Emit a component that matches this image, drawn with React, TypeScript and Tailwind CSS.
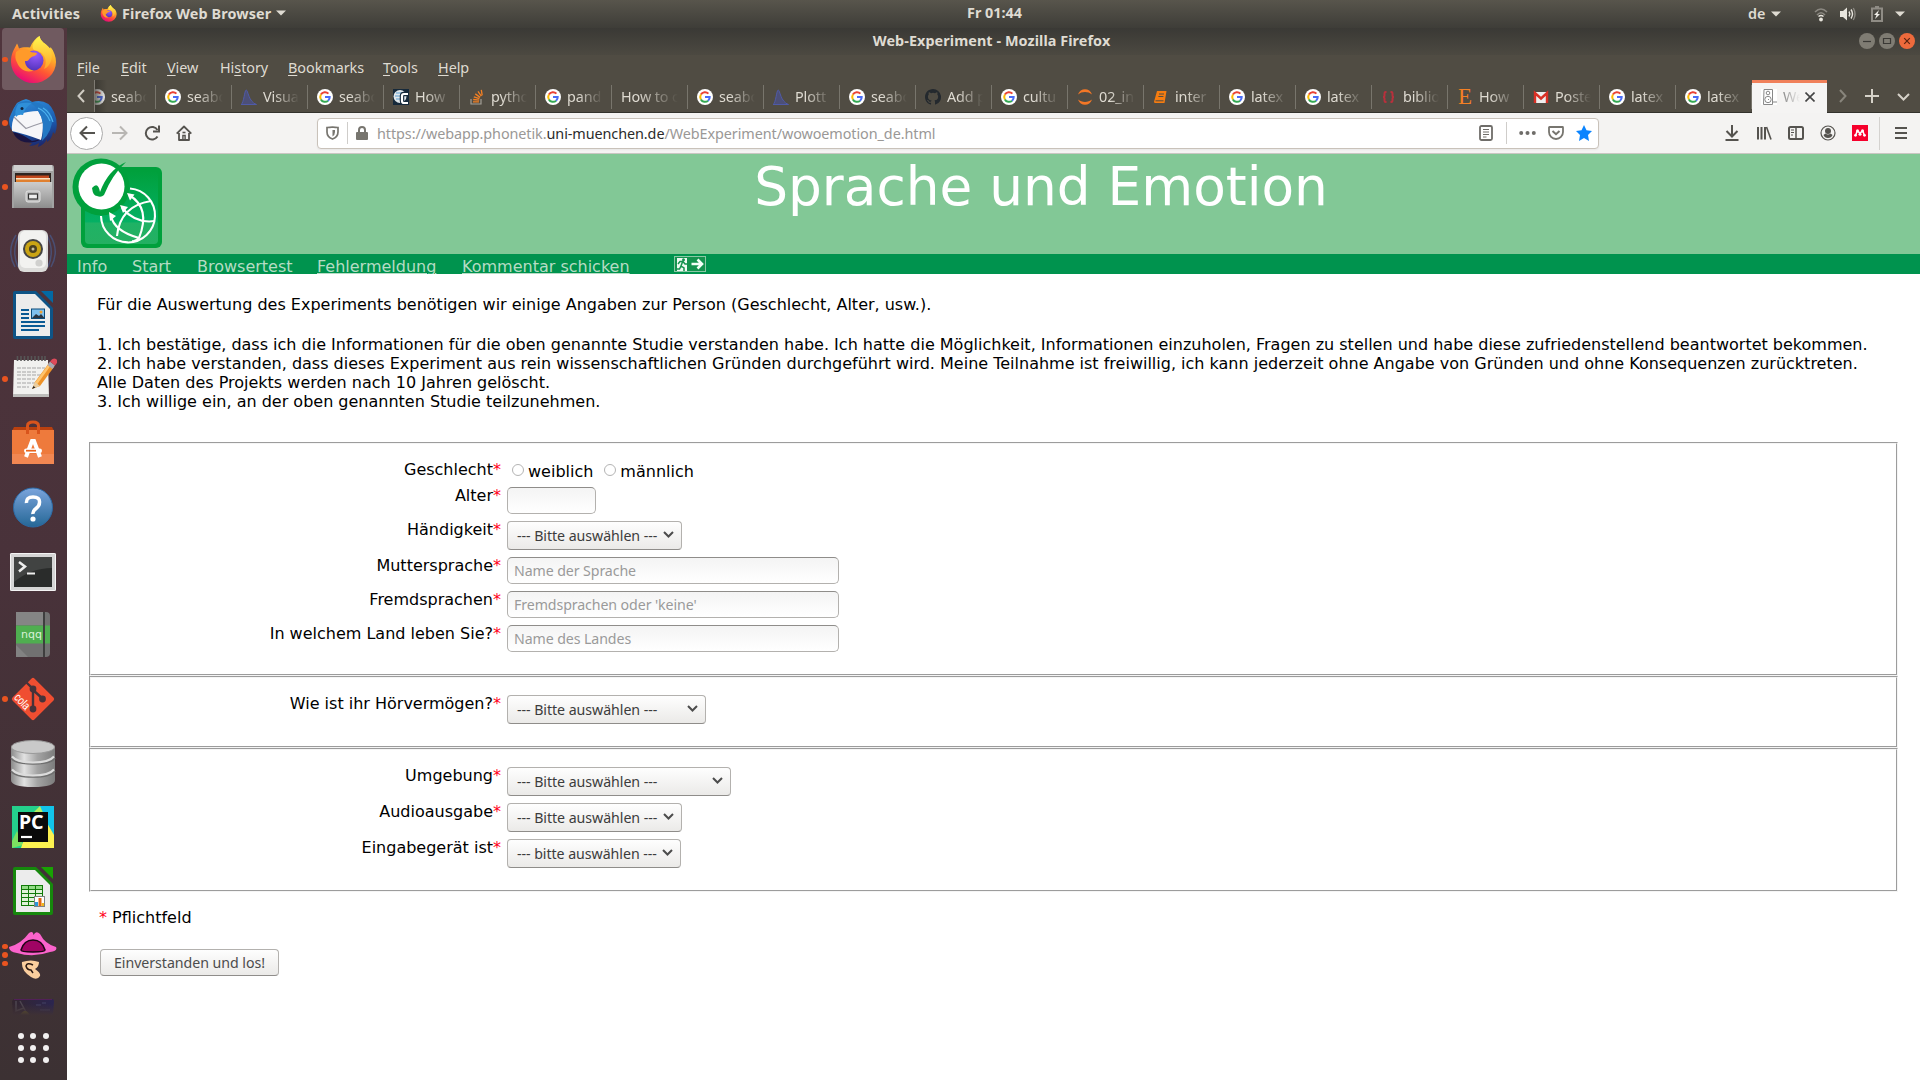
import React from "react";

const UI = "font-['Noto_Sans',sans-serif]";

function Google() {
  return (
    <svg className="h-4 w-4 shrink-0" viewBox="0 0 16 16">
      <circle cx="8" cy="8" r="8" fill="#fff" />
      <g fill="none" strokeWidth="2">
        <path d="M11.4 4.6A4.7 4.7 0 0 0 3.9 5.6" stroke="#ea4335" />
        <path d="M3.9 5.6a4.7 4.7 0 0 0 0 4.8" stroke="#fbbc05" />
        <path d="M3.9 10.4a4.7 4.7 0 0 0 7.2 1.3" stroke="#34a853" />
        <path d="M11.1 11.7A4.7 4.7 0 0 0 12.700 8H8" stroke="#4a6cf7" />
      </g>
    </svg>
  );
}

function Plot() {
  return (
    <svg className="h-4 w-4 shrink-0" viewBox="0 0 16 16">
      <path d="M0 15.500C3 14 3.500 1 5.200 1C7 1 7.500 13 15.500 15.500Z" fill="#4c4f78" stroke="#4f5aa8" strokeWidth="1" />
    </svg>
  );
}

function Favicon({ kind }: { kind: string }) {
  const c = "h-4 w-4 shrink-0";
  switch (kind) {
    case "google":
      return <Google />;
    case "plot":
      return <Plot />;
    case "c":
      return (
        <svg className={c} viewBox="0 0 16 16">
          <rect width="16" height="16" fill="#16293a" />
          <circle cx="7" cy="7.500" r="6.500" fill="#dfe6ea" />
          <path d="M3 4h7M2 7h5M3 10h4" stroke="#5b9bd0" strokeWidth="1.200" />
          <path d="M15 5H11Q9 5 9 7v5q0 2 2 2h4" fill="none" stroke="#16293a" strokeWidth="4.500" />
          <path d="M15 5H11Q9 5 9 7v5q0 2 2 2h4" fill="none" stroke="#fff" strokeWidth="2.200" />
        </svg>
      );
    case "stack":
      return (
        <svg className={c} viewBox="0 0 16 16" fill="none">
          <path d="M2 10v5h10v-5" stroke="#a39f97" strokeWidth="1.200" />
          <path d="M4 12.800h6M4.200 10.500l6 .7M4.800 7.800l5.600 1.900M6.300 4.900l4.800 3.500M9 2.300l3.300 4.800M12.300.8l.9 5.600" stroke="#f48024" strokeWidth="1.300" />
        </svg>
      );
    case "github":
      return (
        <svg className={c} viewBox="0 0 16 16" fill="#24292e">
          <path d="M8 0C3.580 0 0 3.580 0 8c0 3.540 2.290 6.530 5.470 7.590.4.070.55-.17.55-.38v-1.490c-2.010.37-2.530-.49-2.690-.94-.09-.23-.48-.94-.82-1.130-.28-.15-.68-.52-.01-.53.630-.01 1.080.58 1.230.82.720 1.210 1.870.87 2.330.66.070-.52.280-.87.510-1.070-1.780-.2-3.640-.89-3.640-3.950 0-.87.310-1.590.820-2.150-.08-.2-.36-1.020.080-2.120 0 0 .67-.21 2.200.82a7.600 7.600 0 0 1 4 0c1.530-1.040 2.200-.82 2.200-.82.440 1.100.160 1.920.080 2.120.510.560.820 1.270.820 2.150 0 3.070-1.870 3.750-3.650 3.950.290.250.540.730.540 1.480v2.200c0 .21.150.46.550.38A8 8 0 0 0 8 0Z" />
        </svg>
      );
    case "jupyter":
      return (
        <svg className={c} viewBox="0 0 16 16" fill="#f37726">
          <path d="M1 5.500C3-1.500 13-1.500 15 5.500C11 2.200 5 2.200 1 5.500Z" />
          <path d="M1 10.500C3 17.500 13 17.500 15 10.500C11 13.800 5 13.800 1 10.500Z" />
        </svg>
      );
    case "book":
      return (
        <svg className={c} viewBox="0 0 16 16">
          <path d="M4 2H13.500L11.500 14H1.500Q.5 12.500 1.500 11Z" fill="#f57c10" />
          <path d="M6 5h5M5.400 7.500h5M2.500 11.800h8" stroke="#504c43" strokeWidth="1" />
        </svg>
      );
    case "braces":
      return (
        <svg className={c} viewBox="0 0 16 16" fill="none" stroke="#b8303c" strokeWidth="2">
          <path d="M5.500 3H4.500Q3.500 3 3.500 5v1.500Q3.500 8 2 8q1.500 0 1.500 1.500V11q0 2 1 2h1M9.500 3h1q1 0 1 2v1.500Q11.500 8 13 8q-1.500 0-1.500 1.500V11q0 2-1 2h-1" />
        </svg>
      );
    case "e":
      return <span className="w-4 shrink-0 text-center font-['Liberation_Serif',serif] text-[23px] leading-4 text-[#f48024]">E</span>;
    case "gmail":
      return (
        <svg className={c} viewBox="0 0 16 16">
          <rect x="1" y="3" width="14" height="11" fill="#eee" />
          <path d="M2 14V4l6 5.500L14 4v10" fill="none" stroke="#d93025" strokeWidth="2.400" />
        </svg>
      );
    default:
      return null;
  }
}

const tabs: [string, string][] = [
  ["google", "seabo"], ["google", "seabo"], ["plot", "Visual"], ["google", "seabo"], ["c", "How"],
  ["stack", "pytho"], ["google", "pand"], ["", "How to c"], ["google", "seabo"], ["plot", "Plott"],
  ["google", "seabo"], ["github", "Add p"], ["google", "cultu"], ["jupyter", "02_in"], ["book", "inter"],
  ["google", "latex"], ["google", "latex"], ["braces", "biblio"], ["e", "How"], ["gmail", "Poste"],
  ["google", "latex"], ["google", "latex"],
];

const menus: [string, string, string, string][] = [
  ["", "F", "ile", "w-[44px]"], ["", "E", "dit", "w-[46px]"], ["", "V", "iew", "w-[53px]"], ["Hi", "s", "tory", "w-[68px]"],
  ["", "B", "ookmarks", "w-[95px]"], ["", "T", "ools", "w-[55px]"], ["", "H", "elp", "w-[50px]"],
];

function Caret() {
  return (
    <svg className="h-[6px] w-[10px]" viewBox="0 0 10 6">
      <path d="M0 .5H10L5 5.500Z" fill="#dfdbd2" />
    </svg>
  );
}

function FirefoxLogo({ className }: { className: string }) {
  return (
    <svg className={className} viewBox="0 0 48 48">
      <defs>
        <linearGradient id="fx" x1=".8" y1="0" x2=".3" y2="1">
          <stop offset="0" stopColor="#fff44f" />
          <stop offset=".35" stopColor="#ffb028" />
          <stop offset=".65" stopColor="#ff5634" />
          <stop offset="1" stopColor="#e8047c" />
        </linearGradient>
        <radialGradient id="fxp" cx=".6" cy=".2" r=".9">
          <stop offset="0" stopColor="#9a5cff" />
          <stop offset="1" stopColor="#4b2fb5" />
        </radialGradient>
        <linearGradient id="fxy" x1="0" y1="0" x2="0" y2="1">
          <stop offset="0" stopColor="#fff84f" />
          <stop offset="1" stopColor="#ffa32a" />
        </linearGradient>
      </defs>
      <path d="M2 26C2 17 5 14 8 7.500c1 2 1.500 3 2 5 3-1.500 7-1.500 11-1C23 6 27 2 30.500 0c1 6 6 7 10 12 0 0 1 1 1-1C45 15 47 21 47 26A22.500 21 0 0 1 2 26Z" fill="url(#fx)" />
      <path d="M30.500 0C24 5 22 11 25 14c9 1 15 9 10 19C43 30 45 18 40.500 12C36 7 31.500 6 30.500 0Z" fill="url(#fxy)" />
      <circle cx="24.500" cy="24.500" r="10" fill="url(#fxp)" />
      <path d="M7 16C12 12 19 13 22 16c2 1 5 0 6 1.500-1 2.500-4 2.500-6 4-3 2-2 4-6 3.500 0 5 4 9 9 9.500-8 3-14-1-17-8C6 23 6 20 7 16Z" fill="#ff9a2a" />
    </svg>
  );
}

function DockIcon({ name }: { name: string }) {
  const c = "h-12 w-12";
  switch (name) {
    case "firefox":
      return <FirefoxLogo className={c} />;
    case "thunderbird":
      return (
        <svg className={c} viewBox="0 0 48 48">
          <defs>
            <linearGradient id="tb" x1=".2" y1="0" x2=".5" y2="1">
              <stop offset="0" stopColor="#2f8fdc" />
              <stop offset=".6" stopColor="#1b5cb0" />
              <stop offset="1" stopColor="#1c2a70" />
            </linearGradient>
          </defs>
          <path d="M8 4Q13 1 17 0Q21 1 23 3Q39-1 45 13Q50 25 46 35L44 33Q43 40 38 43L38 40Q35 46 29 48L30 44Q26 47 20 47Q22 46 23 44Q8 41 2 30Q-2 22 2 15Q5 8 8 4Z" fill="url(#tb)" />
          <path d="M4 33Q12 34 23 42L33 40Q22 46 12 42Q6 39 4 33Z" fill="#1a1440" />
          <path d="M6 16Q20 12 29 12Q33 18 34 24Q34 34 32 41Q16 35 3 32Q2 24 6 16Z" fill="#f6f6f8" />
          <path d="M5 18Q11 24 17 29.500Q26 26 34 23.500" fill="none" stroke="#9a9aa4" strokeWidth="1.200" />
          <path d="M8 16Q8 5 17 4Q26 4 30 13Q36 22 33 42Q44 32 43 18Q38 4 23 3Q14 0 8 5Q4 10 3 18Z" fill="#2378c4" />
          <path d="M9 5Q15 3 23 4Q16 8 14 16Q9 15 7 18Q5 12 9 5Z" fill="#2f8fd8" />
          <circle cx="13" cy="9.500" r="1.500" fill="#12233c" />
          <path d="M29 9Q37 12 41 22M34 9Q41 13 44 23" fill="none" stroke="#4cb2ee" strokeWidth="1.200" />
        </svg>
      );
    case "files":
      return (
        <svg className={c} viewBox="0 0 48 48">
          <defs>
            <linearGradient id="fl" x1="0" y1="0" x2="0" y2="1">
              <stop offset="0" stopColor="#cdcdcd" />
              <stop offset="1" stopColor="#8d8d8d" />
            </linearGradient>
          </defs>
          <path d="M5 2H43Q45 2 45 5V45H3V5Q3 2 5 2Z" fill="#a2a2a2" />
          <path d="M5 2H43L44 8H4Z" fill="#cfcfcf" />
          <rect x="6" y="10" width="36" height="10" fill="#2f2420" />
          <path d="M7 12.500H40V19H7Z" fill="#c2481c" />
          <path d="M7 15H41V20H7Z" fill="#fbe0c0" />
          <path d="M7 16.500H41V20H7Z" fill="#e08030" />
          <path d="M5 19H43V45H5Z" fill="url(#fl)" />
          <rect x="17" y="28" width="14" height="11" rx="2" fill="#bcbcbc" stroke="#e2e2e2" />
          <rect x="19.500" y="31" width="9" height="5" fill="#eee" stroke="#333" strokeWidth="1.200" />
        </svg>
      );
    case "rhythmbox":
      return (
        <svg className={c} viewBox="0 0 48 48">
          <g fill="none" stroke="#4a5886" strokeWidth="1.500" opacity=".75">
            <path d="M7 8Q-3 24 6 40M10 8Q2 24 9 40M41 8Q51 24 42 40M38 8Q46 24 39 40" />
          </g>
          <rect x="9" y="3" width="30" height="42" rx="6" fill="#dcdcda" />
          <rect x="11" y="4" width="26" height="37" rx="5" fill="#f2f2f0" />
          <circle cx="24" cy="22" r="10" fill="#454545" />
          <circle cx="24" cy="22" r="8" fill="#caa414" />
          <circle cx="24" cy="22" r="4" fill="#4a4020" />
          <circle cx="24" cy="22" r="1.500" fill="#c8c0a0" />
          <circle cx="30" cy="36" r="3.600" fill="#d0d0ce" />
        </svg>
      );
    case "writer":
    case "calc": {
      const w = name === "writer";
      return (
        <svg className={c} viewBox="0 0 48 48">
          <path d="M6 0H27L44 17V46Q44 48 42 48H6Q4 48 4 46V2Q4 0 6 0Z" fill={w ? "#0e5486" : "#16880c"} />
          <path d="M32 0H44V12Z" fill={w ? "#0369a3" : "#18a303"} />
          <path d="M7 3H26L41 18V45H7Z" fill="#ececec" />
          {w ? (
            <g>
              <path d="M12 19h8M12 23h8M12 27h8M12 31h24M12 35h24M12 39h18" stroke="#0a5a94" strokeWidth="2" />
              <rect x="22.500" y="18" width="13" height="9.500" fill="#7fc0ee" stroke="#0a4a7a" />
              <path d="M23 27l4-4 3 2 2-2 3.500 4Z" fill="#2a3440" />
              <circle cx="32" cy="21" r="1.500" fill="#f0a030" />
            </g>
          ) : (
            <g>
              <rect x="12.500" y="18.500" width="21" height="20" fill="#e0f2d8" stroke="#117a08" />
              <rect x="13" y="19" width="20" height="3.500" fill="#93dc86" />
              <path d="M12.500 22.500h21M12.500 26.500h21M12.500 30.500h21M12.500 34.500h21M19.500 18.500v20M26.500 18.500v20" stroke="#117a08" />
              <rect x="25.500" y="29.500" width="10" height="10" fill="#fff" stroke="#808080" />
              <path d="M26 35h3v4h-3Z" fill="#2e96d8" />
              <path d="M29.500 31h3v8h-3Z" fill="#e06414" />
              <path d="M32.500 36h2.500v3h-2.500Z" fill="#f2b51c" />
            </g>
          )}
        </svg>
      );
    }
    case "gedit":
      return (
        <svg className={c} viewBox="0 0 48 48">
          <path d="M5 5H39L40 42H4Z" fill="#f1f1ef" />
          <path d="M4 39H40V42H4Z" fill="#bdbdbb" />
          <path d="M8.500 1v5M12 1v5M15.500 1v5M19 1v5M22.500 1v5M26 1v5M29.500 1v5M33 1v5M36 1v5" stroke="#565656" strokeWidth="1.600" />
          <path d="M8 13h28M8 17h20M8 20h24M8 24h18M8 28h18M8 32h12" stroke="#a5a5a5" strokeDasharray="4 1" />
          <path d="M23 34L26 27 40 8 45 12 31 31Z" fill="#ee9228" />
          <path d="M25 29l14-19 2 1.600L27 31Z" fill="#ffc46c" />
          <path d="M23 34l3-7 5 4Z" fill="#e8cda0" />
          <path d="M23 34l1.500-3 2 1.500Z" fill="#222" />
          <path d="M38.500 10l2.500-3.500 5 4L43.500 14Z" fill="#a9a9b2" />
          <path d="M41 6.500Q44 2 47 4T46 10.500Z" fill="#dd4a5a" />
        </svg>
      );
    case "software":
      return (
        <svg className={c} viewBox="0 0 48 48">
          <path d="M5 8H43L45 12H3Z" fill="#b8400f" />
          <rect x="3" y="11" width="42" height="34" fill="#ee7a3c" />
          <rect x="3" y="35" width="42" height="10" fill="#f18752" />
          <path d="M18.500 15V7Q18.500 3 24 3T29.500 7V15" fill="none" stroke="#d9541c" strokeWidth="3" />
          <path d="M17 38L23 22h2L31 38" fill="none" stroke="#fff" strokeWidth="4" />
          <rect x="15" y="29.500" width="18" height="4.500" rx="2.200" fill="#fff" />
          <path d="M17 31.700h10" stroke="#e8651e" strokeWidth="1.700" />
        </svg>
      );
    case "help":
      return (
        <svg className={c} viewBox="0 0 48 48">
          <defs>
            <linearGradient id="hp" x1="0" y1="0" x2="0" y2="1">
              <stop offset="0" stopColor="#7aa4dc" />
              <stop offset="1" stopColor="#256796" />
            </linearGradient>
          </defs>
          <circle cx="24" cy="24.500" r="19.500" fill="url(#hp)" stroke="#2c6aa6" />
          <path d="M17.500 20Q17 14 24 14T30.500 19.500Q30.500 23 27 25.500T24 31" fill="none" stroke="#fff" strokeWidth="3.500" />
          <circle cx="24" cy="36" r="2.600" fill="#fff" />
        </svg>
      );
    case "terminal":
      return (
        <svg className={c} viewBox="0 0 48 48">
          <rect x="1" y="6" width="46" height="38" rx="1.500" fill="#d5d5d5" />
          <rect x="1.500" y="6.500" width="45" height="37" rx="1" fill="none" stroke="#f4f4f4" />
          <rect x="5" y="10" width="38" height="30" fill="#2a2c2b" />
          <path d="M5 10H43V21Q22 21 5 35Z" fill="#414342" />
          <path d="M10 15l6 4.500-6 5" fill="none" stroke="#eee" strokeWidth="2.500" />
          <path d="M18 26.500h8" stroke="#eee" strokeWidth="2" />
        </svg>
      );
    case "nqq":
      return (
        <svg className={c} viewBox="0 0 48 48">
          <path d="M7 1H37Q41 1 41 5V42Q41 46 37 46H7Z" fill="#717171" />
          <path d="M7 1H34V14H7Z" fill="#858585" />
          <rect x="7" y="14.500" width="34" height="18" fill="#4fae50" />
          <path d="M7 34L19 46H7Z" fill="#828282" />
          <path d="M35 1V46" stroke="#3e3e3e" strokeWidth="2" />
          <text x="12" y="26.500" fontSize="11" fill="#d8f2d8" fontFamily="DejaVu Sans">nqq</text>
        </svg>
      );
    case "cola":
      return (
        <svg className={c} viewBox="0 0 48 48">
          <rect x="8.500" y="8.500" width="31" height="31" rx="2" transform="rotate(45 24 24)" fill="#f04e31" />
          <path d="M17 7L24 14V33M24 15L34 24" stroke="#46333a" strokeWidth="2.400" fill="none" />
          <circle cx="24" cy="14" r="3.400" fill="#46333a" />
          <circle cx="33.500" cy="24" r="3.400" fill="#46333a" />
          <circle cx="24" cy="34" r="3.400" fill="#46333a" />
          <text x="0" y="0" fontSize="12" fill="#fff" fontFamily="Liberation Sans" transform="translate(4.500 23) rotate(47) scale(.78 1)">cola</text>
        </svg>
      );
    case "db":
      return (
        <svg className={c} viewBox="0 0 48 48">
          <defs>
            <linearGradient id="db">
              <stop offset="0" stopColor="#8a8a8a" />
              <stop offset=".3" stopColor="#e2e2e2" />
              <stop offset=".6" stopColor="#a4a4a4" />
              <stop offset="1" stopColor="#7c7c7c" />
            </linearGradient>
          </defs>
          <path d="M2 8V41Q2 48 24 48T46 41V8Z" fill="url(#db)" />
          <path d="M2 19Q6 25 24 25T46 19M2 32Q6 38 24 38T46 32" stroke="#6f6f6f" strokeWidth="1.500" fill="none" />
          <path d="M3 17.500Q8 23.500 24 23.500T45 17.500M3 30.500Q8 36.500 24 36.500T45 30.500" stroke="#dcdcdc" strokeWidth="2" fill="none" />
          <ellipse cx="24" cy="8" rx="21.500" ry="6.500" fill="#c9c9c9" stroke="#9a9a9a" />
        </svg>
      );
    case "pycharm":
      return (
        <svg className={c} viewBox="0 0 48 48">
          <rect x="3" y="3" width="42" height="42" fill="#24d08c" />
          <path d="M30 3H45V34L32 12Z" fill="#12c4ea" />
          <path d="M22 12L31 3 35 12Z" fill="#b2ef62" />
          <path d="M3 45V38L8 28 14 42Z" fill="#7ce060" />
          <path d="M12 45L15 36 38 20 45 32V45Z" fill="#fcf150" />
          <rect x="9" y="9" width="30" height="30" fill="#0a0a0a" />
          <text x="10" y="26" fontSize="19.500" fontWeight="700" fill="#fff" fontFamily="Noto Sans">PC</text>
          <path d="M12 34h11" stroke="#fff" strokeWidth="2.200" />
        </svg>
      );
    case "mouth":
      return (
        <svg className={c} viewBox="0 0 48 48">
          <path d="M0 16Q12 13 20 2Q24-1 24.500 4Q27-1 31 3Q36 13 47 16Q49 20 41 21Q24 27 8 22Q0 21 0 16Z" fill="#fb63cc" />
          <path d="M12 19Q15 9 24 9T36 19Q36 21 24 21T12 19Z" fill="#a00464" stroke="#1c0614" strokeWidth="1.600" />
          <path d="M13 31Q22 28 30 31Q30 36 26 38Q32 42 31 45Q28 50 22 46Q12 40 13 31Z" fill="#fbce9e" />
          <path d="M24 34Q18 31 17 35Q18 39 22 39L24 42" fill="none" stroke="#2c1a14" strokeWidth="1.500" />
        </svg>
      );
    default:
      return null;
  }
}

const dock: [string, number][] = [
  ["firefox", 1], ["thunderbird", 1], ["files", 1], ["rhythmbox", 0], ["writer", 0], ["gedit", 1], ["software", 0], ["help", 0],
  ["terminal", 0], ["nqq", 0], ["cola", 1], ["db", 0], ["pycharm", 0], ["calc", 0], ["mouth", 3],
];

function Dock() {
  return (
    <nav className="flex w-[67px] shrink-0 flex-col bg-linear-to-b from-[#50353d] via-[#49323a] to-[#3c3133]">
      {dock.map(([name, dots], i) => (
        <div key={name} className={i === 0 ? "relative -mt-px flex h-16 items-center justify-center pt-px pr-px" : "relative flex h-16 items-center justify-center pr-px"}>
          {i === 0 && <span className="absolute top-px left-[2px] h-[62px] w-[62px] rounded-[4px] bg-[#705a60]" />}
          <span className="absolute left-[2px] flex flex-col gap-[3px]">
            {Array.from({ length: dots }, (_, d) => (
              <span key={d} className="h-[5.5px] w-[5.5px] rounded-full bg-[#e95420]" />
            ))}
          </span>
          <span className="relative"><DockIcon name={name} /></span>
        </div>
      ))}
      <div className="flex h-[32px] justify-center pt-3 pr-px">
        <svg className="h-4 w-[42px]" viewBox="0 0 42 16">
          <defs>
            <linearGradient id="dm">
              <stop offset="0" stopColor="#33262f" />
              <stop offset="1" stopColor="#2b2550" />
            </linearGradient>
            <linearGradient id="dmf" x1="0" y1="0" x2="0" y2="1">
              <stop offset=".3" stopColor="#3e3135" stopOpacity="0" />
              <stop offset="1" stopColor="#3e3135" />
            </linearGradient>
          </defs>
          <path d="M2 0H40Q42 0 42 2L41 16H1L0 2Z" fill="url(#dm)" />
          <path d="M2 .5H40" stroke="#512058" />
          <path d="M4 2V12L12 9M8 2l6 11" stroke="#4e4650" strokeWidth="1.500" fill="none" />
          <path d="M8 16q5-8 10 0Z" fill="#6f6624" />
          <path d="M24 6h5M30 4h4M28 11h10" stroke="#454364" />
          <rect width="42" height="16" fill="url(#dmf)" />
        </svg>
      </div>
      <div className="grid w-[49px] grid-cols-3 gap-[6px] pt-[14px] pl-[18px]">
        {Array.from({ length: 9 }, (_, i) => (
          <span key={i} className="h-[6px] w-[6px] rounded-full bg-[#f2f0f0]" />
        ))}
      </div>
    </nav>
  );
}

function TopBar() {
  return (
    <header className={`${UI} flex h-7 shrink-0 items-center bg-linear-to-b from-[#58554c] to-[#3e3d38] text-[14.4px] font-bold text-[#dfdbd2]`}>
      <div className="-mt-px flex w-[967px] items-center pl-3">
        <span className="w-[88px] tracking-[0.13px]">Activities</span>
        <FirefoxLogo className="h-[17px] w-[17px]" />
        <span className="ml-[5px] w-[154px] whitespace-nowrap tracking-[0.1px]">Firefox Web Browser</span>
        <Caret />
      </div>
      <span className="-mt-0.5 w-[781px] tracking-[0px]">Fr 01:44</span>
      <span className="w-[23px] font-semibold">de</span>
      <Caret />
      <svg className="ml-[32px] h-4 w-4" viewBox="0 0 16 16" fill="none">
        <path d="M2 6Q8 0 14 6M4 9q4-4.500 8 0" stroke="#8b8881" strokeWidth="1.600" />
        <path d="M5.500 10.500q2.500-2 5 0" stroke="#e8e5dd" strokeWidth="1.500" />
        <circle cx="8" cy="13.500" r="1.900" fill="#e8e5dd" />
      </svg>
      <svg className="-mt-px ml-[11px] h-4 w-4" viewBox="0 0 16 16" fill="none">
        <path d="M0 5H3L7 1.500V14.500L3 11H0Z" fill="#e8e5dd" />
        <path d="M9 5.500q1.600 2.500 0 5M11 3.500q3 4.500 0 9" stroke="#e8e5dd" strokeWidth="1.400" />
        <path d="M13.300 2q3.500 6 0 12" stroke="#8b8881" strokeWidth="1.400" />
      </svg>
      <svg className="-mt-px ml-[15px] h-4 w-[12px]" viewBox="0 0 12 16">
        <path d="M1 2.500H11V15H1ZM4 1h4" fill="none" stroke="#8f8c85" strokeWidth="2" />
        <path d="M8 4L3 9h2.500L4 13l5-5H6.500Z" fill="#f0eee8" />
      </svg>
      <span className="ml-[12px]"><Caret /></span>
    </header>
  );
}

function WindowChrome() {
  return (
    <div className={`${UI} flex h-[85px] shrink-0 flex-col bg-[#504c43] text-[14.4px] text-[#dfdbd2]`}>
      <div className="relative flex h-[27px] items-center justify-end gap-1 bg-linear-to-b from-[#3a3935] to-[#4c4941] pr-[5px] pb-px">
        <span className="absolute inset-x-0 pr-1 text-center font-bold tracking-[0.07px]">Web-Experiment - Mozilla Firefox</span>
        {["min", "max", "close"].map((k) => (
          <svg key={k} className="h-4 w-4" viewBox="0 0 16 16" fill="none">
            <circle cx="8" cy="8" r="8" fill={k === "close" ? "#ee6a3c" : "#7f7c73"} />
            <g stroke={k === "close" ? "#5a2310" : "#3a3935"} strokeWidth="1.200">
              {k === "min" && <path d="M4 8.500h8" />}
              {k === "max" && <path d="M4.500 5.500h7v5h-7Z" />}
              {k === "close" && <path d="M5.200 5.200l5.600 5.600M10.800 5.200l-5.600 5.600" />}
            </g>
          </svg>
        ))}
      </div>
      <div className="flex h-[25px] items-center pl-[10px]">
        {menus.map(([a, u, b, w]) => (
          <span key={u + b} className={`${w} whitespace-nowrap tracking-[-0.05px]`}>
            {a}<span className="underline decoration-1 underline-offset-2">{u}</span>{b}
          </span>
        ))}
      </div>
      <div className="flex h-[33px] border-b border-[#33322d]">
        <div className="flex w-[27px] items-center justify-center">
          <svg className="h-[14px] w-2" viewBox="0 0 8 14"><path d="M7 1L1.500 7 7 13" fill="none" stroke="#d0ccc3" strokeWidth="2" /></svg>
        </div>
        <div className="relative flex w-[1658px] overflow-hidden border-l border-[#7f7b73]">
          <span className="absolute left-0 z-10 h-full w-[12px] bg-linear-to-r from-[#35332d]/70 to-transparent" />
          {tabs.map(([icon, label], i) => (
            <div key={i} className={i === 0 ? "-ml-[15px] flex w-[76px] shrink-0 items-center pt-px" : "flex w-[76px] shrink-0 items-center pt-px"}>
              <div className="flex w-[75px] items-center gap-[6px] overflow-hidden pl-[9px]">
                <Favicon kind={icon} />
                <span className={`${icon ? "w-[36px]" : "w-[57px]"} overflow-hidden whitespace-nowrap tracking-[-0.1px] leading-5 [mask-image:linear-gradient(to_right,#000_30%,transparent)]`}>{label}</span>
              </div>
              <span className="h-6 w-px bg-[#78756c]" />
            </div>
          ))}
        </div>
        <div className="relative -mb-px flex w-[75px] items-center border-t-[3px] border-[#f0805a] bg-[#f5f4f3] pl-[9px] text-[#555]">
          <svg className="-mt-0.5 h-4 w-4" viewBox="0 0 16 16" fill="none" stroke="#888">
            <rect width="16" height="16" fill="#fff" stroke="none" />
            <path d="M3 .5H11.500V15.500H2.500Z" />
            <circle cx="7" cy="4" r="1.800" />
            <circle cx="7" cy="10.500" r="3.200" />
            <path d="M7 10.500h1M12 13h4" />
          </svg>
          <span className="-mt-0.5 ml-[6px] w-[17px] overflow-hidden whitespace-nowrap [mask-image:linear-gradient(to_right,#000a,transparent)]">We</span>
          <svg className="-mt-0.5 ml-[5px] h-[10px] w-[10px]" viewBox="0 0 10 10"><path d="M.5.5l9 9M9.500.5l-9 9" stroke="#444" strokeWidth="1.600" /></svg>
        </div>
        <svg className="mt-[9px] ml-[12px] h-[14px] w-2" viewBox="0 0 8 14"><path d="M1 1l5.500 6L1 13" fill="none" stroke="#88857c" strokeWidth="2" /></svg>
        <svg className="mt-[9px] ml-[18px] h-[14px] w-[14px]" viewBox="0 0 14 14"><path d="M7 0v14M0 7h14" stroke="#d6d2c9" strokeWidth="2" /></svg>
        <svg className="mt-[13px] ml-[18px] h-2 w-[13px]" viewBox="0 0 13 8"><path d="M1 1l5.500 5.500L12 1" fill="none" stroke="#d6d2c9" strokeWidth="2" /></svg>
      </div>
    </div>
  );
}

function Toolbar() {
  return (
    <div className={`${UI} flex h-[41px] shrink-0 items-center border-b border-[#c9c6c2] bg-[#f4f3f2] text-[14.4px]`}>
      <span className="ml-[3px] flex h-[33px] w-[33px] items-center justify-center rounded-full border border-[#aaa] bg-white">
        <svg className="h-4 w-4" viewBox="0 0 16 16" fill="none" stroke="#55534f" strokeWidth="2"><path d="M16 8H1.500M8 1.500L1.500 8 8 14.500" /></svg>
      </span>
      <svg className="ml-[9px] h-4 w-4" viewBox="0 0 16 16" fill="none" stroke="#b8b6b3" strokeWidth="2"><path d="M0 8H14.500M8 1.500L14.500 8 8 14.500" /></svg>
      <svg className="ml-4 h-4 w-4" viewBox="0 0 16 16" fill="none" stroke="#55534f" strokeWidth="2"><path d="M13.500 11.500A6.300 6.300 0 1 1 13.500 5" /><path d="M15 .5V6.500H9" /></svg>
      <svg className="ml-4 h-4 w-4" viewBox="0 0 16 16" fill="none" stroke="#55534f" strokeWidth="1.800">
        <path d="M.7 8.700L8 1.500l7.300 7.200M3 8V15H13V8" strokeLinejoin="round" />
        <path d="M6.900 15v-4.500h2.200V15" strokeWidth="1.400" />
        <path d="M6.500 7.500h3" strokeWidth="1.600" />
      </svg>
      <div className="ml-[125px] flex h-[31px] w-[1282px] items-center rounded-[4px] border border-[#c9c2ba] bg-white shadow-xs">
        <svg className="ml-2 h-[14px] w-[13px]" viewBox="0 0 13 14" fill="none" stroke="#77756f" strokeWidth="1.700"><path d="M1 1.500Q4 1.500 6.500 1 9 1.500 12 1.500V6Q12 11 6.500 13 1 11 1 6Z" /><path d="M6.500 4v6.500Q9 9 9 6V4Z" fill="#77756f" stroke="none" /></svg>
        <span className="ml-2 h-[22px] w-px bg-[#cfcdca]" />
        <svg className="ml-2 h-[14px] w-[12px]" viewBox="0 0 12 14"><path d="M3 7V4Q3 1 6 1T9 4V7" fill="none" stroke="#77756f" strokeWidth="2" /><rect y="6" width="12" height="8" rx="1" fill="#77756f" /></svg>
        <span className="ml-[9px] w-[1102px] pt-px whitespace-nowrap tracking-[-0.08px] text-[#9a9896]">
          https://webapp.phonetik.<span className="text-[#2b2b2b]">uni-muenchen.de</span>/WebExperiment/wowoemotion_de.html
        </span>
        <svg className="h-4 w-[14px]" viewBox="0 0 14 16" fill="none" stroke="#6f6d69"><rect x="1" y="1" width="12" height="14" rx="1.500" strokeWidth="1.800" /><path d="M4 4.500h6M4 7h6M4 9.500h6M4 12h3.500" /></svg>
        <span className="ml-[13px] h-[22px] w-px bg-[#cfcdca]" />
        <svg className="ml-3 h-1 w-[17px]" viewBox="0 0 17 4" fill="#6f6d69"><circle cx="2.200" cy="2" r="2" /><circle cx="8.500" cy="2" r="2" /><circle cx="14.800" cy="2" r="2" /></svg>
        <svg className="ml-3 h-[14px] w-4" viewBox="0 0 16 14" fill="none" stroke="#77756f" strokeWidth="1.800"><path d="M1 1.500Q1 1 1.500 1h13q.5 0 .5.500V6A7 7 0 0 1 1 6Z" /><path d="M4.500 5L8 8.200 11.500 5" strokeWidth="2" /></svg>
        <svg className="ml-[12px] h-4 w-4" viewBox="0 0 16 16" fill="#0a84ff"><path d="M8 0l2.500 5.200L16 6l-4 3.900 1 6.100-5-3-5 3 1-6.100L0 6l5.500-.8Z" /></svg>
      </div>
      <svg className="ml-[125px] h-4 w-4" viewBox="0 0 16 16" fill="none" stroke="#55534f" strokeWidth="2"><path d="M8 0V11M2.500 6L8 11.500 13.500 6M1.500 15h13" /></svg>
      <svg className="ml-4 h-4 w-4" viewBox="0 0 16 16" fill="none" stroke="#55534f" strokeWidth="2"><path d="M2 2V14.500M5.500 2V14.500M9 2V14.500" /><path d="M10.500 2l4.500 12.500" strokeWidth="1.600" /></svg>
      <svg className="ml-4 h-4 w-4" viewBox="0 0 16 16" fill="none" stroke="#55534f" strokeWidth="2"><rect x="1" y="2" width="14" height="12" rx="1.500" /><path d="M8 2v12" strokeWidth="1.500" /><path d="M3 5h3M3 7.500h3M3 10h2" strokeWidth="1" /></svg>
      <svg className="ml-4 h-4 w-4" viewBox="0 0 16 16"><circle cx="8" cy="8" r="7" fill="none" stroke="#55534f" strokeWidth="1.200" /><circle cx="8" cy="6" r="3" fill="#55534f" /><path d="M3.500 10Q5 8.500 5.500 8.500q2.500 2 5 0 .5 0 2 1.500Q11.500 13 8 13T3.500 10Z" fill="#55534f" /></svg>
      <svg className="ml-4 h-4 w-4" viewBox="0 0 16 16"><rect width="16" height="16" fill="#f6002c" /><path d="M3.500 10.500L5 6.500Q7 6.500 8 8.500Q9 6.500 11 6.500L12.500 10.500" fill="none" stroke="#fff" strokeWidth="1.500" /><g fill="#fff"><circle cx="5.500" cy="5.800" r="1.500" /><circle cx="10.500" cy="5.800" r="1.500" /><circle cx="8" cy="9.300" r="1.500" /><circle cx="3.500" cy="10.300" r="1.400" /><circle cx="12.500" cy="10.300" r="1.400" /></g></svg>
      <span className="ml-[11px] h-[33px] w-px bg-[#d4d2cf]" />
      <svg className="ml-[15px] h-[14px] w-[12px]" viewBox="0 0 12 14" stroke="#55534f" strokeWidth="2"><path d="M0 2h12M0 7h12M0 12h12" /></svg>
    </div>
  );
}

function SiteLogo() {
  return (
    <svg className="h-[92px] w-[92px]" viewBox="0 0 92 92">
      <defs>
        <linearGradient id="lg" x1="0" y1="0" x2="0" y2="1">
          <stop offset="0" stopColor="#00a03c" />
          <stop offset=".7" stopColor="#04b064" />
          <stop offset=".71" stopColor="#1fb265" />
          <stop offset="1" stopColor="#24b062" />
        </linearGradient>
      </defs>
      <rect x="9" y="9" width="81" height="81" rx="6" fill="#00a03c" />
      <rect x="13" y="13" width="73" height="73" rx="4" fill="url(#lg)" />
      <circle cx="29" cy="29" r="28.500" fill="#00a03c" />
      <circle cx="29.500" cy="28.500" r="23" fill="#fff" />
      <path d="M20 30Q26 23 28 34Q36 12 54 4Q40 17 32 37Q29 40 25 38Q21 38 20 30Z" fill="#00a03c" />
      <g fill="none" stroke="#fff" strokeWidth="2.100">
        <path d="M58 30.500A27 27 0 1 1 29 58" />
        <path d="M57 37Q79 50 67 80Q63 84 60 83" />
        <path d="M50 50Q64 66 83 63" />
        <path d="M39 58Q42 73 67 80" />
        <path d="M79 43Q48 48 45 78" />
      </g>
      <path d="M55 35l7.500 1.500-4.500 6ZM48 47l8 2-5 6ZM37 54l7 4-6 5Z" fill="#fff" />
    </svg>
  );
}

function SiteHeader() {
  return (
    <div className="shrink-0 font-['DejaVu_Sans',sans-serif]">
      <div className="flex h-[100px] items-start bg-[#82c896]">
        <div className="w-[92px] pt-[4px] pl-[5px]"><SiteLogo /></div>
        <h1 className="flex-1 pl-[3px] text-center text-[53.3px] leading-[66px] whitespace-nowrap text-white">Sprache und Emotion</h1>
      </div>
      <div className="flex h-5 items-start overflow-hidden bg-[#00934e] pt-[3px] pl-[10px] text-[16px] leading-[19px] text-[#b6dcc4]">
        <span className="w-[55px]">Info</span>
        <span className="w-[65px]">Start</span>
        <span className="w-[120px]">Browsertest</span>
        <span className="w-[145px]"><span className="underline decoration-1 underline-offset-1">Fehlermeldung</span></span>
        <span className="w-[212px]"><span className="underline decoration-1 underline-offset-1">Kommentar schicken</span></span>
        <svg className="-mt-px h-4 w-8" viewBox="0 0 32 16">
          <rect x=".5" y=".5" width="31" height="15" fill="#14934f" stroke="#8cc8a6" />
          <rect x="3" y="2" width="10" height="13" fill="#f0faf4" />
          <circle cx="9.500" cy="3.800" r="1.500" fill="#14934f" />
          <path d="M4 8l2-2.500h3L11 8h2M8.500 6L7 10l3 2v3M7 10l-1.500 3H3" fill="none" stroke="#14934f" strokeWidth="1.500" />
          <path d="M17.500 8H28M23.500 3.500L28 8l-4.500 4.500" fill="none" stroke="#f4fff8" strokeWidth="2.600" />
        </svg>
      </div>
    </div>
  );
}

function Select({ label, width }: { label: string; width: string }) {
  return (
    <div className={`${UI} ${width} flex h-[29px] items-center justify-between rounded-[4px] border border-[#b3b1ae] border-b-[#8f8d8a] bg-linear-to-b from-[#fefefe] to-[#ebeae8] pr-[7px] pl-[9px] text-[14.2px] text-[#3c3c3c]`}>
      <span className="whitespace-nowrap tracking-[-0.05px]">{label}</span>
      <svg className="-mt-0.5 h-[7px] w-[11px]" viewBox="0 0 11 7"><path d="M1 1l4.500 4.500L10 1" fill="none" stroke="#4c4c4c" strokeWidth="2" /></svg>
    </div>
  );
}

function Input({ placeholder, width }: { placeholder?: string; width: string }) {
  return (
    <input
      placeholder={placeholder}
      className={`${UI} ${width} block h-[27px] rounded-[5px] border border-[#b3b1ae] border-t-[#8f8d8a] bg-linear-to-b from-[#f4f4f4] to-white px-[6px] text-[14.2px] tracking-[-0.1px] placeholder:text-[#9a9a9a]`}
    />
  );
}

function Row({ label, height, children }: { label: string; height: string; children: React.ReactNode }) {
  return (
    <div className={`flex items-start ${height}`}>
      <label className="-mt-px mr-[6px] w-[410px] text-right">
        {label}<span className="text-[#ff0020]">*</span>
      </label>
      {children}
    </div>
  );
}

function Group({ height, children }: { height: string; children: React.ReactNode }) {
  return (
    <section className={`${height} border border-t-[#9c9c9c] border-r-[#f5f5f5] border-b-[#f5f5f5] border-l-[#9c9c9c]`}>
      <div className="h-full border border-t-[#f5f5f5] border-r-[#9c9c9c] border-b-[#9c9c9c] border-l-[#f5f5f5] pt-[17px]">{children}</div>
    </section>
  );
}

function Radio({ label }: { label: string }) {
  return (
    <span className="flex items-center">
      <span className="-mt-[3px] mr-[4px] h-3 w-3 rounded-full border border-[#b4b4b4] bg-white" />
      <span>{label}</span>
    </span>
  );
}

export default function App() {
  return (
    <div className="flex h-[1080px] w-[1920px] flex-col overflow-hidden bg-white">
      <TopBar />
      <div className="flex min-h-0 flex-1">
        <Dock />
        <main className="flex min-w-0 flex-1 flex-col">
          <WindowChrome />
          <Toolbar />
          <SiteHeader />
          <div className="pl-[22px] font-['DejaVu_Sans',sans-serif] text-[16px] leading-[19px] text-black">
            <div className="pt-[21px] pl-2 whitespace-nowrap">
              <p>Für die Auswertung des Experiments benötigen wir einige Angaben zur Person (Geschlecht, Alter, usw.).</p>
              <p className="mt-[21px]">1. Ich bestätige, dass ich die Informationen für die oben genannte Studie verstanden habe. Ich hatte die Möglichkeit, Informationen einzuholen, Fragen zu stellen und habe diese zufriedenstellend beantwortet bekommen.</p>
              <p>2. Ich habe verstanden, dass dieses Experiment aus rein wissenschaftlichen Gründen durchgeführt wird. Meine Teilnahme ist freiwillig, ich kann jederzeit ohne Angabe von Gründen und ohne Konsequenzen zurücktreten.</p>
              <p>Alle Daten des Projekts werden nach 10 Jahren gelöscht.</p>
              <p>3. Ich willige ein, an der oben genannten Studie teilzunehmen.</p>
            </div>
            <form className="mt-[31px] w-[1809px]">
              <Group height="h-[234px]">
                <Row label="Geschlecht" height="h-[26px]">
                  <div className="mt-px flex gap-[11px] pl-[5px]">
                    <Radio label="weiblich" />
                    <Radio label="männlich" />
                  </div>
                </Row>
                <Row label="Alter" height="h-[34px]"><Input width="w-[89px]" /></Row>
                <Row label="Händigkeit" height="h-[36px]"><Select label="--- Bitte auswählen ---" width="w-[175px]" /></Row>
                <Row label="Muttersprache" height="h-[34px]"><Input width="w-[332px]" placeholder="Name der Sprache" /></Row>
                <Row label="Fremdsprachen" height="h-[34px]"><Input width="w-[332px]" placeholder="Fremdsprachen oder 'keine'" /></Row>
                <Row label="In welchem Land leben Sie?" height="h-[34px]"><Input width="w-[332px]" placeholder="Name des Landes" /></Row>
              </Group>
              <Group height="h-[72px]">
                <Row label="Wie ist ihr Hörvermögen?" height="h-[36px]"><Select label="--- Bitte auswählen ---" width="w-[199px]" /></Row>
              </Group>
              <Group height="h-[144px]">
                <Row label="Umgebung" height="h-[36px]"><Select label="--- Bitte auswählen ---" width="w-[224px]" /></Row>
                <Row label="Audioausgabe" height="h-[36px]"><Select label="--- Bitte auswählen ---" width="w-[175px]" /></Row>
                <Row label="Eingabegerät ist" height="h-[36px]"><Select label="--- bitte auswählen ---" width="w-[174px]" /></Row>
              </Group>
              <p className="mt-[16px] pl-[10px]"><span className="text-[#ff0020]">*</span> Pflichtfeld</p>
              <button type="button" className={`${UI} mt-[22px] ml-[11px] block h-[27px] w-[179px] rounded-[4px] border border-[#b3b1ae] border-b-[#8f8d8a] bg-linear-to-b from-[#fefefe] to-[#ebeae8] text-[14.2px] leading-[25px] tracking-[-0.05px] whitespace-nowrap text-[#4c4c4c]`}>
                Einverstanden und los!
              </button>
            </form>
          </div>
        </main>
      </div>
    </div>
  );
}
